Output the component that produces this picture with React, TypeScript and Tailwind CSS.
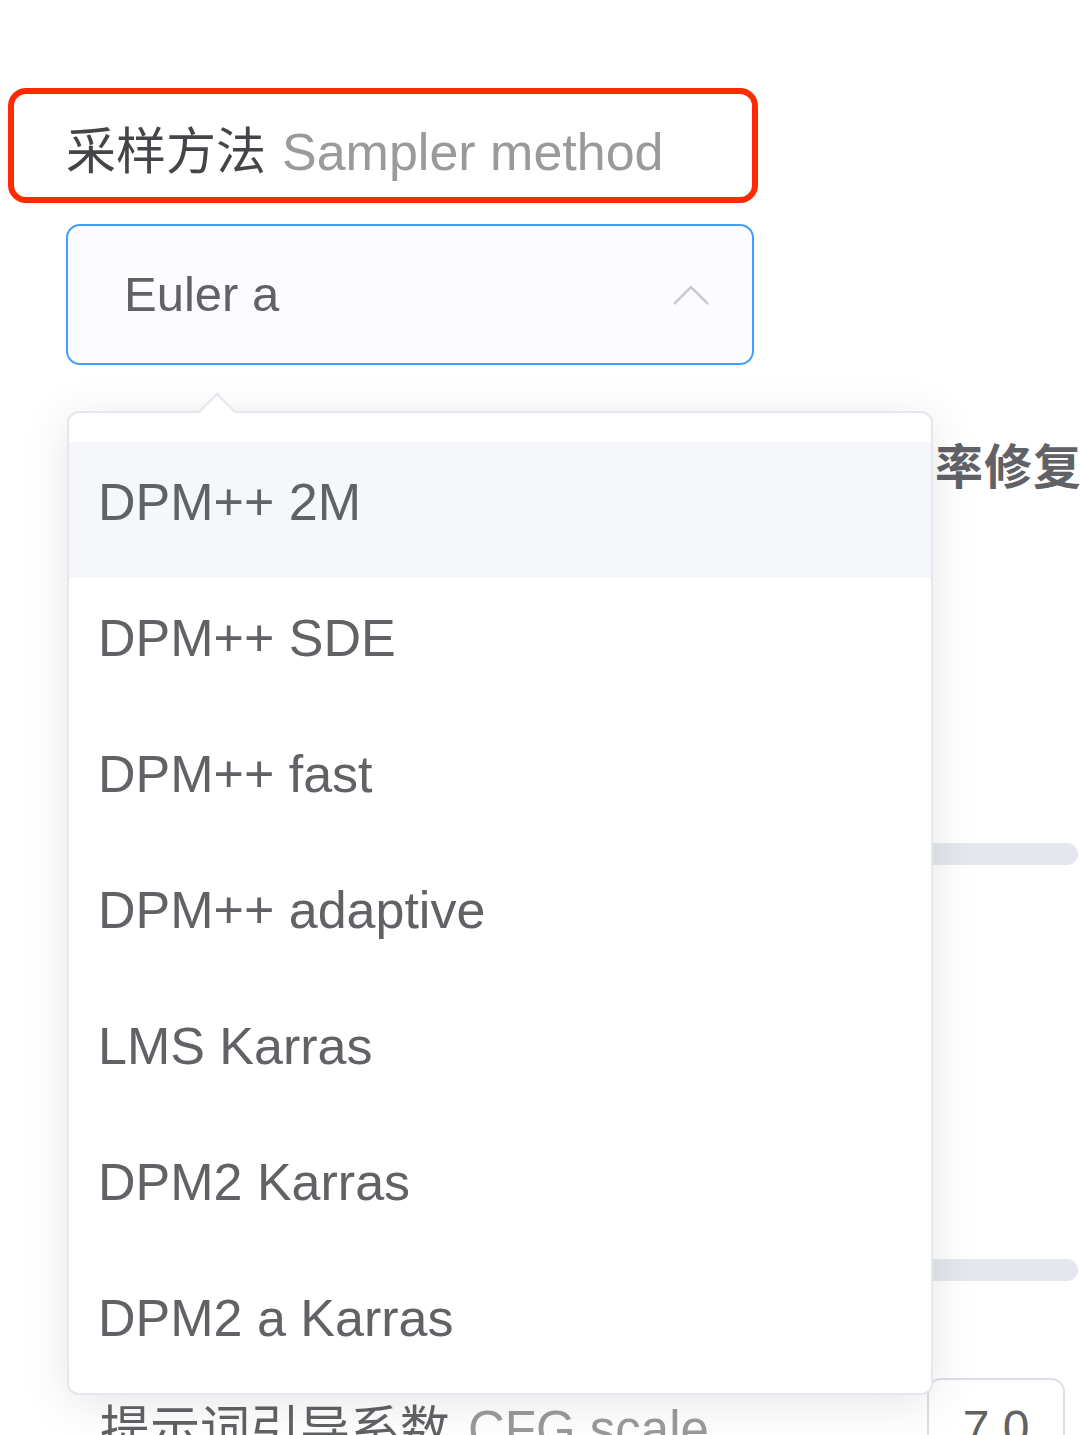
import React from "react";

const items = [
  "DPM++ 2M",
  "DPM++ SDE",
  "DPM++ fast",
  "DPM++ adaptive",
  "LMS Karras",
  "DPM2 Karras",
  "DPM2 a Karras",
];

const font = { fontFamily: '"Liberation Sans", "Noto Sans CJK SC", Arial, sans-serif' };

export default function App() {
  return (
    <div
      className="relative w-[1080px] h-[1435px] overflow-hidden bg-white"
      style={font}
    >
      <div className="flex flex-col">
        {/* Label with red annotation */}
        <div className="pt-[88px] pl-[8px]">
          <div className="w-[750px] h-[115px] border-[6px] border-[#ff2a00] rounded-[18px] flex items-center pl-[52px] pt-[12px] whitespace-nowrap">
            <span className="text-[50px] leading-none text-[#444548]">采样方法</span>
            <span className="text-[52px] leading-none text-[#9a9a9c] ml-[16px]">Sampler method</span>
          </div>
        </div>

        {/* Select */}
        <div className="mt-[21px] ml-[66px]">
          <div className="w-[688px] h-[141px] border-2 border-[#409eff] rounded-[14px] bg-[#fcfcfe] flex items-center justify-between pl-[56px] pr-[42px]">
            <span className="text-[49px] leading-none text-[#606266]">Euler a</span>
            <svg width="38" height="22" viewBox="0 0 38 22" fill="none">
              <path d="M2 20 L19 3 L36 20" stroke="#c8cbd1" strokeWidth="2.5" />
            </svg>
          </div>
        </div>

        {/* Background content partially hidden */}
        <div className="mt-[79px] ml-[788px] whitespace-nowrap text-[48px] leading-none font-bold text-[#606266] tracking-[1px]">
          高分辨率修复
        </div>
        <div className="mt-[351px] ml-[400px] w-[678px] h-[22px] rounded-full bg-[#e4e7ed]" />
        <div className="mt-[394px] ml-[400px] w-[678px] h-[22px] rounded-full bg-[#e4e7ed]" />

        <div className="mt-[97px] flex items-start justify-between pl-[100px] pr-[15px]">
          <div className="mt-[26px] whitespace-nowrap leading-none">
            <span className="text-[50px] text-[#606266]">提示词引导系数</span>
            <span className="text-[51px] text-[#9a9a9c] ml-[18px]">CFG scale</span>
          </div>
          <div className="w-[138px] h-[100px] border-2 border-[#dcdfe6] rounded-[14px] bg-white flex justify-center pt-[24px]">
            <span className="text-[48px] leading-none text-[#606266]">7.0</span>
          </div>
        </div>
      </div>

      {/* Dropdown popover */}
      <div className="absolute left-[67px] top-[411px] w-[866px] h-[984px] border-2 border-[#e4e7ed] rounded-[12px] bg-white shadow-[0_8px_48px_rgba(0,0,0,0.1)]">
        <div className="absolute left-[135px] top-[-15px] w-[26px] h-[26px] rotate-45 bg-white border-l-2 border-t-2 border-[#e4e7ed]" />
        <div className="relative pt-[29px]">
          {items.map((it, i) => (
            <div
              key={it}
              className={
                i === 0
                  ? "h-[136px] flex items-center pb-[17px] px-[29px] bg-[#f5f7fa]"
                  : "h-[136px] flex items-center pb-[17px] px-[29px]"
              }
            >
              <span className="text-[52px] leading-none text-[#606266] whitespace-nowrap">{it}</span>
            </div>
          ))}
        </div>
      </div>
    </div>
  );
}
